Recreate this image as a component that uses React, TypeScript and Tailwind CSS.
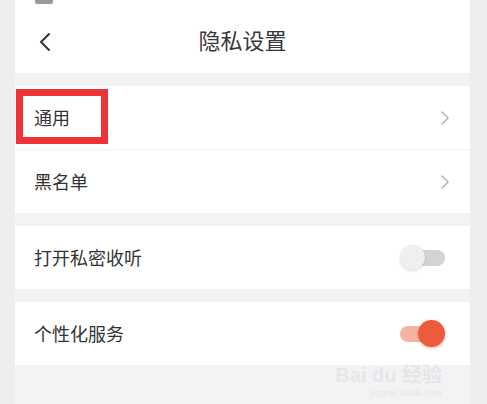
import React from "react";

const font = { fontFamily: '"Noto Sans CJK SC", "Noto Sans", sans-serif' };

function Chevron() {
  return (
    <svg width="10" height="16" viewBox="0 0 10 16" fill="none">
      <path d="M2 2l6 6-6 6" stroke="#b5b5b5" strokeWidth="1.5" strokeLinecap="round" strokeLinejoin="round" />
    </svg>
  );
}

function Row({ label, right, boxed }: { label: string; right: React.ReactNode; boxed?: boolean }) {
  return (
    <div className="relative flex h-[63px] items-center justify-between bg-white pl-[19px] pr-[20px]">
      <span className="text-[18px] text-[#333]">{label}</span>
      {right}
      {boxed && (
        <div className="absolute left-[1px] top-[3px] h-[55px] w-[92px] border-[7px] border-[#ec3338]" />
      )}
    </div>
  );
}

function Toggle({ on }: { on: boolean }) {
  if (on) {
    return (
      <div className="relative mr-[5px] h-[28px] w-[45px]">
        <div className="absolute left-0 top-[6px] h-[16px] w-[40px] rounded-full bg-[#f5b3a4]" />
        <div className="absolute right-0 top-0 h-[27px] w-[27px] rounded-full bg-[#ec5b3b] shadow-[0_1px_3px_rgba(236,91,59,0.5)]" />
      </div>
    );
  }
  return (
    <div className="relative mr-[5px] h-[26px] w-[45px]">
      <div className="absolute right-0 top-[5px] h-[16px] w-[36px] rounded-full bg-[#d3d3d3]" />
      <div className="absolute left-0 top-0 h-[25px] w-[25px] rounded-full bg-[#efefef] shadow-[0_1px_3px_rgba(0,0,0,0.15)]" />
    </div>
  );
}

export default function App() {
  return (
    <div className="flex h-[404px] w-[487px] justify-start bg-[#eeeeef] pl-[15px]" style={font}>
      <div className="flex w-[455px] flex-col bg-[#f3f3f5]">
        <div className="h-[73px] bg-white">
          <div className="h-[6px] pl-[20px]">
            <div className="h-[4px] w-[18px] rounded-b-[2px] bg-[#9a9a9a]" />
          </div>
          <div className="relative flex h-[67px] items-center justify-center">
            <svg className="absolute left-[23px] top-[26px]" width="14" height="20" viewBox="0 0 14 20" fill="none">
              <path d="M11 2L3 10l8 8" stroke="#333" strokeWidth="2" strokeLinecap="round" strokeLinejoin="round" />
            </svg>
            <span className="text-[22px] text-[#383838]">隐私设置</span>
          </div>
        </div>
        <div className="h-[13px]" />
        <Row label="通用" right={<Chevron />} boxed />
        <div className="h-[1px] bg-[#f0f0f0]" />
        <Row label="黑名单" right={<Chevron />} />
        <div className="h-[13px]" />
        <Row label="打开私密收听" right={<Toggle on={false} />} />
        <div className="h-[13px]" />
        <Row label="个性化服务" right={<Toggle on />} />
        <div className="relative flex-1">
          <div className="absolute right-[28px] top-[-2px] flex flex-col items-end text-[#e6e6e8]">
            <span className="text-[20px] font-bold leading-[24px]" style={{ fontFamily: '"Liberation Sans", "Noto Sans CJK SC", sans-serif' }}>Bai du 经验</span>
            <span className="text-[9px] leading-[12px]" style={{ fontFamily: '"Liberation Sans", sans-serif' }}>jingyan.baidu.com</span>
          </div>
        </div>
      </div>
    </div>
  );
}
